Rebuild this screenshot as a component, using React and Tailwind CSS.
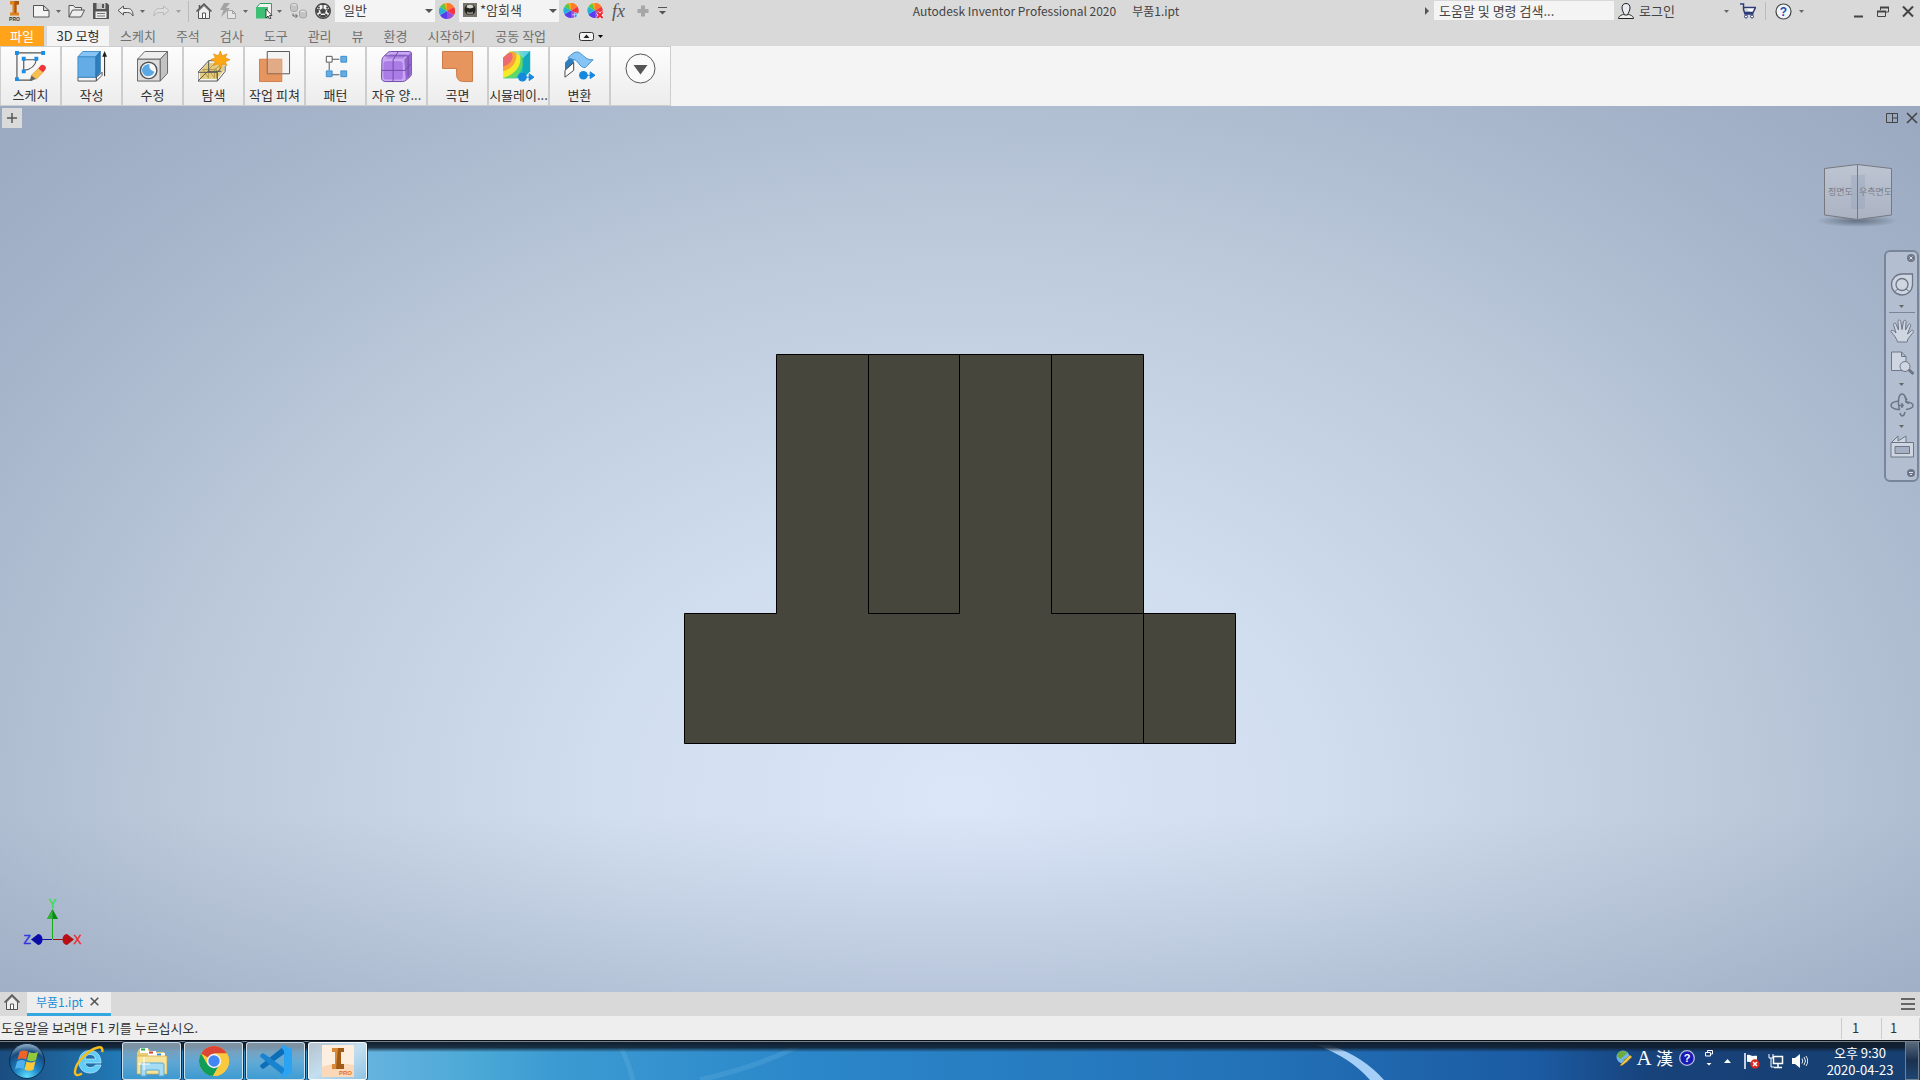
import React from "react";

const FONT = "font-['Noto_Sans_CJK_KR',sans-serif]";

function Caret({ className = "" }) {
  return (
    <svg className={`h-[3px] w-[5px] shrink-0 ${className}`} viewBox="0 0 5 3" aria-hidden="true">
      <path d="M0 0h5L2.5 3z" fill="#666" />
    </svg>
  );
}

function SelectArrow() {
  return (
    <svg className="pointer-events-none absolute right-0.5 top-[9px] h-1 w-2" viewBox="0 0 8 4" aria-hidden="true">
      <path d="M0 0h8L4 4z" fill="#555" />
    </svg>
  );
}

function Tool({ label, className = "", box = "0 0 16 16", children }) {
  return (
    <button type="button" aria-label={label} className={`h-4 shrink-0 ${className}`}>
      <svg className="block h-full w-full" viewBox={box} aria-hidden="true">
        {children}
      </svg>
    </button>
  );
}

function Wheel() {
  return (
    <g>
      <path d="M8 8L4 1A8 8 0 0 1 12 1z" fill="#ffa424" />
      <path d="M8 8L8 0A8 8 0 0 1 15 4z" fill="#ff7a2c" />
      <path d="M8 8L15 4A8 8 0 0 1 15 12z" fill="#f5353c" />
      <path d="M8 8L15 12A8 8 0 0 1 8 16z" fill="#9a4fd8" />
      <path d="M8 8L8 16A8 8 0 0 1 1 12z" fill="#5a3cf0" />
      <path d="M8 8L1 12A8 8 0 0 1 1 4z" fill="#28b0d8" />
      <path d="M8 8L1 4A8 8 0 0 1 5 .5z" fill="#5cc83c" />
    </g>
  );
}

function TitleBar() {
  return (
    <header className="flex h-[22px] items-center bg-[#d9d9d9] text-[#444]">
      <div className="flex shrink-0 items-center">
        <button type="button" aria-label="Inventor" className="ml-2 h-5 w-3">
          <svg className="block h-full w-full overflow-visible" viewBox="0 0 12 20">
            <path d="M2 0h9v3.500H8.500v8H11v3H2v-3h2.500v-8H2z" fill="#e0811e" />
            <path d="M6.500 0H11v3.500H8.500v8l-2 1z" fill="#a9560f" />
            <text x="6.500" y="20" textAnchor="middle" fontSize="5" fontWeight="700" fontFamily="Liberation Sans, sans-serif" fill="#333">PRO</text>
          </svg>
        </button>
        <Tool label="새로 만들기" className="ml-[13px] w-[17px]" box="0 0 17 16">
          <path d="M.500 2.500h10l5.500 5v6.500H.500zM10.500 2.500V7.500H16" fill="#f4f4f4" stroke="#555" />
        </Tool>
        <Caret className="ml-[6px]" />
        <Tool label="열기" className="ml-[7px] w-[17px]" box="0 0 17 16">
          <path d="M1 14V2.500h4.500l1.500 2h6.500V7M1 14L4.500 7h12L13 14z" fill="#eee" stroke="#555" />
        </Tool>
        <Tool label="저장" className="ml-2 w-4">
          <path d="M0 0h14l2 2v14H0z" fill="#555" />
          <path d="M3.500 0h9v6h-9z" fill="#c9c9c9" />
          <path d="M9 1h2v4H9z" fill="#555" />
          <path d="M2.500 8.500h11V15h-11z" fill="#eee" />
          <path d="M4 10.500h8M4 13h8" stroke="#777" />
        </Tool>
        <Tool label="명령 취소" className="ml-2 w-[17px]" box="0 0 17 16">
          <path d="M1 7.500L6.500 3v2.500h4c3.500 0 5.500 2 5.500 7.500-1.500-2.500-3-3.500-5.500-3.500h-4V12z" fill="#eee" stroke="#555" />
        </Tool>
        <Caret className="ml-[6px]" />
        <Tool label="명령 복구" className="ml-2 w-[17px]" box="0 0 17 16">
          <path d="M16 7.500L10.500 3v2.500h-4C3 5.500 1 7.500 1 13c1.500-2.500 3-3.500 5.500-3.500h4V12z" fill="#ddd" stroke="#b9b9b9" />
        </Tool>
        <Caret className="ml-[6px] opacity-50" />
        <span className="ml-[7px] h-[21px] w-px bg-[#bbb]" />
        <Tool label="홈" className="ml-[7px] w-4">
          <path d="M2.500 8v7.500h11V8L8 2.500z" fill="#eee" stroke="#555" />
          <path d="M.500 8.500L8 1l7.500 7.500M3.500 5V2" fill="none" stroke="#555" strokeWidth="1.500" />
          <path d="M6.500 15v-5h3v5" fill="#fff" stroke="#555" />
        </Tool>
        <Tool label="업데이트" className="ml-2 w-4">
          <path d="M4 0h6L6 5h4L1 14l2.500-7H0z" fill="#a3a3a3" />
          <path d="M7.500 7.500h5l3 3v5h-8zM12.500 7.500v3h3" fill="#e6e6e6" stroke="#a3a3a3" />
        </Tool>
        <Caret className="ml-[7px]" />
        <Tool label="선택" className="ml-2 w-[17px]" box="0 0 17 16">
          <path d="M.500 4.500L4 .500h11.500V11L12 15" fill="#f2f2f2" stroke="#2f9e5c" />
          <path d="M0 4h12v11.500H0z" fill="#3fbf74" />
          <path d="M10 6v9l2-2 1.500 3 1.500-.8-1.500-2.700H16z" fill="#fff" stroke="#222" strokeWidth=".8" />
        </Tool>
        <Caret className="ml-1" />
        <Tool label="재지정" className="ml-2 w-[17px]" box="0 0 17 16">
          <path d="M.500 2.500a3.500 2 0 0 1 7 0v4a3.500 2 0 0 1-7 0zM9.500 9a3.500 2 0 0 1 7 0v4a3.500 2 0 0 1-7 0z" fill="#c4c4c4" stroke="#a6a6a6" />
          <path d="M1.500 2.500a2.500 1.300 0 0 1 5 0zM10.500 9a2.500 1.300 0 0 1 5 0z" fill="#e8e8e8" />
          <path d="M3 10.500V13h4M5.500 11l2 2-2 2" fill="none" stroke="#666" />
        </Tool>
        <Tool label="재질" className="ml-2 w-4">
          <circle cx="8" cy="8" r="7.300" fill="#f2f2f2" stroke="#444" strokeWidth="1.400" />
          <path d="M8 5l3 2-1 3.500H6L5 7zM5 1l3 1.700L11 1zM1 6l2.500 0L4 9 1.500 11zM15 6h-2.500L12 9l2.500 2zM5 14.500l.5-2.500h5l.5 2.500zM2.500 3.500L5 3.800 4.500 5.500 2.500 5.500zM13.500 3.500L11 3.800l.5 1.700 2 0zM3 12l2-1.500 .5 1.500-1 1.500zM13 12l-2-1.500-.5 1.500 1 1.500z" fill="#444" />
          <path d="M8 2.500V5M5 7L3.500 6M11 7l1.500-1M6 10.500L5 12M10 10.500l1 1.500" stroke="#444" />
        </Tool>
        <div className="relative ml-1 h-[22px] w-[100px]">
          <select aria-label="재질" className="block h-full w-full appearance-none bg-[#f4f4f4] pb-0.5 pl-2 text-[13px] leading-5">
            <option>일반</option>
          </select>
          <SelectArrow />
        </div>
        <Tool label="모양" className="ml-1 w-4"><Wheel /></Tool>
        <div className="relative ml-1 h-[22px] w-[100px]">
          <select aria-label="모양" className="block h-full w-full appearance-none bg-[#f4f4f4] pb-0.5 pl-[21px] text-[13px] leading-5">
            <option>*암회색</option>
          </select>
          <svg className="pointer-events-none absolute left-1 top-[3px] h-[14px] w-[14px]" viewBox="0 0 14 14">
            <path d="M0 0h14v14H0z" fill="#77756c" />
            <circle cx="7" cy="6.500" r="5.500" fill="#22221f" />
            <path d="M3.500 4.500a3.500 3 0 0 1 7 0L7 5.500z" fill="#d7d6ce" />
            <path d="M4 8.500q3 2 6 0v2q-3 2-6 0z" fill="#8e8c82" />
          </svg>
          <SelectArrow />
        </div>
        <Tool label="조정" className="ml-1 w-[17px]" box="0 0 17 17">
          <Wheel />
          <path d="M9 12.500h7M11.500 10.500h3v3l-1.500 3-1.500-3z" fill="#1e8be6" stroke="#fff" strokeWidth=".6" />
        </Tool>
        <Tool label="지우기" className="ml-[7px] w-[17px]" box="0 0 17 17">
          <Wheel />
          <path d="M10.500 10l5.500 6M16 10l-5.500 6" stroke="#fff" strokeWidth="3.500" />
          <path d="M10.500 10l5.500 6M16 10l-5.500 6" stroke="#ee2530" strokeWidth="2.200" />
        </Tool>
        <button type="button" aria-label="매개변수" className="ml-2 h-5 w-4 text-left font-['Liberation_Serif',serif] text-[18px] italic leading-5 text-[#555]">
          <span>fx</span>
        </button>
        <Tool label="추가" className="ml-[9px] w-3" box="0 0 12 16">
          <path d="M4 2.500h4v3.500h3.500v4H8v3.500H4V10H.500V6H4z" fill="#a6a6a6" />
        </Tool>
        <Tool label="사용자화" className="ml-[9px] w-[9px]" box="0 0 9 16">
          <path d="M0 4.500h9" stroke="#555" />
          <path d="M1 8h7L4.500 11.500z" fill="#555" />
        </Tool>
      </div>

      <h1 className="flex min-w-0 flex-1 justify-center gap-4 whitespace-nowrap text-xs leading-5">
        <span>Autodesk Inventor Professional 2020</span>
        <span>부품1.ipt</span>
      </h1>

      <div className="flex shrink-0 items-center">
        <button type="button" aria-label="검색 접기" className="h-4 w-1">
          <svg className="block h-full w-full" viewBox="0 0 4 16"><path d="M0 4l4 4-4 4z" fill="#555" /></svg>
        </button>
        <input
          type="text"
          aria-label="검색"
          placeholder="도움말 및 명령 검색..."
          className="mb-0.5 ml-[5px] h-[19px] w-[180px] bg-[#f4f4f4] px-[5px] text-[13px] leading-[19px] placeholder:text-[#444]"
        />
        <button type="button" className="ml-1 flex w-[99px] items-center gap-[5px] text-[13px] leading-5">
          <svg className="h-4 w-4 shrink-0" viewBox="0 0 16 16">
            <path d="M.500 15.500c0-2.500 3-3.500 6-4.500h3c3 1 6 2 6 4.500z" fill="#eee" stroke="#222" />
            <path d="M8 .500c3 0 4 2 4 4.500S10 10.500 9.500 12h-3C6 10.500 4 7.500 4 5S5 .500 8 .500z" fill="#e8ecf2" stroke="#222" />
          </svg>
          <span>로그인</span>
        </button>
        <Caret className="ml-[7px]" />
        <Tool label="앱 스토어" className="ml-[11px] w-4">
          <path d="M0 1h3.500v5.500L5 11h8.500M3.500 4.500H15.500L13 9.500H4.500" fill="#fff" stroke="#2c3a75" strokeWidth="1.500" />
          <circle cx="6" cy="13.500" r="1.500" fill="#fff" stroke="#2c3a75" />
          <circle cx="12" cy="13.500" r="1.500" fill="#fff" stroke="#2c3a75" />
        </Tool>
        <span className="ml-[9px] h-[18px] w-px bg-[#bbb]" />
        <button type="button" aria-label="도움말" className="ml-[9px] h-[17px] w-[17px]">
          <svg className="block h-full w-full" viewBox="0 0 17 17">
            <circle cx="8.500" cy="8.500" r="7.500" fill="#f2f5fa" stroke="#444" strokeWidth="1.200" />
            <text x="8.500" y="13" textAnchor="middle" fontSize="12" fontWeight="700" fontFamily="Liberation Sans, sans-serif" fill="#1c4fb5">?</text>
          </svg>
        </button>
        <Caret className="ml-[7px]" />
        <Tool label="최소화" className="ml-[50px] w-[9px]" box="0 0 9 16">
          <path d="M0 13.500h9" stroke="#444" strokeWidth="2" />
        </Tool>
        <Tool label="이전 크기로" className="ml-[14px] w-3" box="0 0 12 16">
          <path d="M3.500 7V4.500h8V9H9" fill="none" stroke="#444" />
          <path d="M3 4.500h9" stroke="#444" strokeWidth="2" />
          <path d="M.500 8.500h8v5h-8z" fill="none" stroke="#444" />
          <path d="M0 8.500h9" stroke="#444" strokeWidth="2" />
        </Tool>
        <Tool label="닫기" className="ml-[13px] mr-1.5 w-3" box="0 0 12 16">
          <path d="M1 3.500l10 10M11 3.500l-10 10" stroke="#444" strokeWidth="2" />
        </Tool>
      </div>
    </header>
  );
}

const TABS = ["스케치", "주석", "검사", "도구", "관리", "뷰", "환경", "시작하기", "공동 작업"];

function RibbonTabs() {
  return (
    <nav className="flex h-6 items-stretch bg-[#d9d9d9] pt-1 text-[13px] leading-5 text-[#707070]">
      <button type="button" className="w-11 bg-[#ffa31a] pb-0.5 text-white">파일</button>
      <button type="button" className="ml-[3px] w-[62px] bg-[#f4f4f4] pb-0.5 text-[#333]">3D 모형</button>
      <div className="ml-px flex">
        {TABS.map((t) => (
          <button key={t} type="button" className="px-[10px] pb-0.5">{t}</button>
        ))}
      </div>
      <button type="button" aria-label="리본 표시" className="ml-[23px] flex items-center gap-1">
        <svg className="h-[9px] w-[15px]" viewBox="0 0 15 9">
          <rect x=".5" y=".5" width="14" height="8" rx="2" fill="#f4f4f4" stroke="#333" />
          <path d="M4.500 6h6l-3-3.500z" fill="#222" />
        </svg>
        <svg className="h-[3px] w-[5px]" viewBox="0 0 5 3"><path d="M0 0h5L2.500 3z" fill="#000" /></svg>
      </button>
    </nav>
  );
}

const PANELS = [
  {
    label: "스케치",
    icon: (
      <g>
        <path d="M3 2h26M2 4v26h16" fill="none" stroke="#555" strokeWidth="1.200" />
        <path d="M9 9v11c8-1 12-5 13-11z" fill="none" stroke="#555" strokeWidth="1.200" />
        <path d="M0 0h4v4H0zM27 0h4v4h-4zM0 27h4v4H0zM7 6h4v4H7zM20 6h4v4h-4zM7 19h4v4H7z" fill="#1a8fe8" />
        <path d="M15 31l2-6 5 4z" fill="#666" />
        <path d="M17 25l7-7 5 4-7 7z" fill="#f8bf50" stroke="#d8952a" strokeWidth=".6" />
        <path d="M24 18l2-2.500a3 3 0 0 1 5 4L29 22z" fill="#f0343c" />
      </g>
    ),
  },
  {
    label: "작성",
    icon: (
      <g>
        <path d="M2 27h19v4H2zM21 31l6-6v-3l-6 5z" fill="#f4f4f4" stroke="#555" />
        <path d="M2 6L7 .500h18L20.500 6z" fill="#86c4f5" stroke="#3f8ecb" />
        <path d="M2 6h18.500v21H2z" fill="#63ace6" stroke="#3f8ecb" />
        <path d="M20.500 6L25 .500V22l-4.500 5z" fill="#2f7fbe" stroke="#2b74b0" />
        <path d="M29.500 26V3" stroke="#222" />
        <path d="M27 6l2.500-6L32 6z" fill="#222" />
      </g>
    ),
  },
  {
    label: "수정",
    icon: (
      <g>
        <path d="M.500 8.500L8 .500h23.500L24 8.500z" fill="#eee" stroke="#666" />
        <path d="M.500 8.500H24v22.500H.500z" fill="#dcdcdc" stroke="#666" />
        <path d="M24 8.500L31.500 .500V23L24 31z" fill="#c2c2c2" stroke="#666" />
        <circle cx="12" cy="20" r="8.500" fill="#fafafa" stroke="#555" strokeWidth="1.500" />
        <path d="M7 15.500c3-2 5-2 6-1.500-1 4 1 6 5 7.500-1 3-4 5-7 4.500-4-.5-6-4-6-7z" fill="#5ba9e4" />
      </g>
    ),
  },
  {
    label: "탐색",
    icon: (
      <g>
        <path d="M2 21l8-9h17v8l-8 9H2z" fill="#e3cd82" />
        <path d="M5 19l6 9 0-9 6 9 0-9 9-6M11 19l7-7M5 19h14v9" fill="none" stroke="#b79b48" />
        <path d="M0 22L11 10h6M0 22v9h20l8-10v-6M0 22h20v9M20 22l4-5M0 31l10-10h14M11 10v11" fill="none" stroke="#555" />
        <path d="M23 0l2 5 5-2-2 4 5 2-5 2 2 4-5-2-2 5-2-5-5 2 2-4-5-2 5-2-2-4 5 2z" fill="#ffa816" stroke="#e58a06" strokeWidth=".7" />
      </g>
    ),
  },
  {
    label: "작업 피쳐",
    icon: (
      <g>
        <path d="M8.500 .500h23v23h-23z" fill="#f4f4f4" stroke="#555" />
        <path d="M.500 8.500h23v23H.500z" fill="#e6955f" stroke="#d27f48" />
        <path d="M8.500 8.500h15v15h-15z" fill="#e2ab88" />
        <path d="M8.500 8.500v15h15" fill="none" stroke="#8a6550" />
      </g>
    ),
  },
  {
    label: "패턴",
    icon: (
      <g>
        <path d="M12 8.500h8M12 24.500h8M9.500 12v8" stroke="#555" />
        <path d="M6.500 5.500h6v6h-6z" fill="#fff" stroke="#555" />
        <path d="M21.500 5.500h6v6h-6zM6.500 20.500h6v6h-6zM21.500 20.500h6v6h-6z" fill="#63ace6" stroke="#3f8ecb" />
      </g>
    ),
  },
  {
    label: "자유 양...",
    icon: (
      <g>
        <path d="M1 9Q1 7 3 5.500L7 1.500Q8 .500 10 .500h19Q31.500 .500 31.500 3v20Q31.500 25 30 26.500L26 30Q24.500 31.500 22 31.500H5Q.500 31.500 .500 27z" fill="#c9a9f2" stroke="#6f4aa8" />
        <path d="M24 9l6-7q1.500 1 1.500 3v18q0 2-2 4l-4 3z" fill="#9468ce" />
        <rect x="2.500" y="10.500" width="20" height="19" rx="3" fill="#ab7be6" />
        <path d="M5 8L9 3h18l-4 5z" fill="#b38ae8" />
        <path d="M1 20h24l6-7M12.500 31V9l5-8M4 5h24v21" fill="none" stroke="#6f4aa8" />
      </g>
    ),
  },
  {
    label: "곡면",
    icon: <path d="M.500 .500h31v31H22c-5 0-7-3-7-8V18H.500z" fill="#e6955f" stroke="#cc7a45" />,
  },
  {
    label: "시뮬레이...",
    icon: (
      <g>
        <path d="M0 7L8 0h20v21l-7 7H0z" fill="#18bccb" />
        <path d="M0 7L8 0h12c4 10 0 20-7 28H0z" fill="#5fd86a" />
        <path d="M0 7L8 0h8c5 10 0 20-9 25L0 28z" fill="#f5e929" />
        <path d="M0 7L7 1h6c3 9-3 17-13 20z" fill="#f9a33a" />
        <path d="M0 7L6 2h3c3 7-2 12-9 14z" fill="#ee6a72" />
        <path d="M20 8l8-8v21l-7 7z" fill="#0f9fb4" opacity=".7" />
        <path d="M9 0h19l-7 7z" fill="#7fd8f0" opacity=".7" />
        <circle cx="20" cy="27" r="4.500" fill="#1787de" />
        <path d="M23 27h5M27 23.500l5 3.500-5 3.500z" fill="#1787de" stroke="#1787de" />
      </g>
    ),
  },
  {
    label: "변환",
    icon: (
      <g>
        <path d="M1 12L10 2v10L1 20z" fill="#2f7fbe" />
        <path d="M1 20l9-8v8l-9 7z" fill="#fff" stroke="#444" />
        <path d="M4 7Q10 1 13 1c6 0 8 9 17 8l-8 8c-6 1-8-9-12-8z" fill="#86c4f5" stroke="#3f8ecb" />
        <circle cx="20" cy="25" r="4.500" fill="#1787de" />
        <path d="M23 25h5M27 21.500l5 3.500-5 3.500z" fill="#1787de" stroke="#1787de" />
      </g>
    ),
  },
];

function Ribbon() {
  return (
    <div className="flex h-[60px] gap-0.5 bg-[#f4f4f4] py-px pl-px">
      {PANELS.map((p) => (
        <button
          key={p.label}
          type="button"
          className="flex w-[59px] shrink-0 flex-col items-center justify-between whitespace-nowrap bg-linear-to-b from-[#fdfdfd] to-[#ececec] pt-1 text-[13px] leading-5 text-[#333] outline outline-1 outline-[#cdcdcd]"
        >
          <svg className="h-8 w-8" viewBox="0 0 33 33" aria-hidden="true">{p.icon}</svg>
          <span>{p.label}</span>
        </button>
      ))}
      <button
        type="button"
        aria-label="추가 패널"
        className="flex w-[59px] shrink-0 justify-center bg-linear-to-b from-[#fdfdfd] to-[#ececec] pt-[6px] outline outline-1 outline-[#cdcdcd]"
      >
        <svg className="h-[31px] w-[31px]" viewBox="0 0 31 31" aria-hidden="true">
          <circle cx="15.500" cy="15.500" r="14.500" fill="#fafafa" stroke="#555" />
          <path d="M8.500 12h14l-7 9.500z" fill="#555" />
        </svg>
      </button>
    </div>
  );
}

function Model() {
  return (
    <svg className="h-[390px] w-[552px]" viewBox="0 0 552 390" aria-label="부품1">
      <path d="M92.500 .500H459.500V259.500H551.500V389.500H.500V259.500H92.500z" fill="#47463c" stroke="#000" />
      <path d="M184.500 .500V259.500H275.500V.500M367.500 .500V259.500H459.500V389.500" fill="none" stroke="#000" />
    </svg>
  );
}

function ViewCube() {
  return (
    <svg className="absolute right-5 top-[57px] h-16 w-[84px]" viewBox="0 0 84 64" aria-label="ViewCube">
      <defs>
        <radialGradient id="cubeShadow">
          <stop offset="0" stopColor="#5f6b7d" stopOpacity=".9" />
          <stop offset="1" stopColor="#5f6b7d" stopOpacity="0" />
        </radialGradient>
        <linearGradient id="cubeFace" x1="0" y1="0" x2="0" y2="1">
          <stop offset="0" stopColor="#bdc4d2" />
          <stop offset="1" stopColor="#abb3c3" />
        </linearGradient>
      </defs>
      <ellipse cx="41" cy="58" rx="41" ry="6" fill="url(#cubeShadow)" />
      <path d="M8.500 5.500L41.500 1.500v55L8.500 52z" fill="url(#cubeFace)" stroke="#77797f" />
      <path d="M41.500 1.500l34 4V52l-34 4.500z" fill="url(#cubeFace)" stroke="#77797f" />
      <path d="M35 12h14v34H35z" fill="#8fa0ba" opacity=".35" />
      <path d="M41.500 2v55" stroke="#77797f" />
      <text x="12" y="32" fontSize="9" fill="#787d88">정면도</text>
      <text x="43" y="32" fontSize="9" fill="#787d88">우측면도</text>
    </svg>
  );
}

function NavButton({ label, className = "", children }) {
  return (
    <button type="button" aria-label={label} className={`h-6 w-6 ${className}`}>
      <svg className="block h-full w-full" viewBox="0 0 24 24" fill="#d0d6e1" stroke="#6c7686">
        {children}
      </svg>
    </button>
  );
}

function NavBar() {
  return (
    <div className="absolute right-px top-36 flex w-[35px] flex-col items-center rounded-md border-2 border-[#78859a] bg-[#b3bfd0] pb-[3px]">
      <button type="button" aria-label="닫기" className="mr-0.5 mt-0.5 h-2 w-2 self-end">
        <svg className="block h-full w-full" viewBox="0 0 8 8"><circle cx="4" cy="4" r="4" fill="#6c7686" /><path d="M2.500 2.500l3 3M5.500 2.500l-3 3" stroke="#dde" /></svg>
      </button>
      <NavButton label="전체 탐색 휠" className="mt-[11px]">
        <path d="M12 1h10.500v11A10.500 10.500 0 1 1 12 1z" strokeWidth="1.300" />
        <path d="M4 19l4-3M20 19l-4-3" />
        <circle cx="12" cy="11.500" r="6" strokeWidth="1.300" />
      </NavButton>
      <Caret className="mt-2" />
      <span className="mt-1 h-px w-[26px] shrink-0 bg-[#78859a]" />
      <NavButton label="초점이동" className="mt-[6px]">
        <path d="M7.500 23c-1-4-3-6-6.500-10.500 0-2 2.500-1.500 5 1.500L3.500 5.500c0-2 2-2 2.500-.5L8.500 11 8 2.500c0-2 2.500-2 2.800 0L12 10.500l1.500-8c.5-2 2.700-1.500 2.500.5L15.500 11l3-5.500c1-1.500 2.700-.5 2 1.500L17.500 15l4-3.500c1.500-1 2.500.5 1.500 2L18 20l-1 3z" />
      </NavButton>
      <NavButton label="줌" className="mt-2">
        <path d="M1.500 1h10l4.500 4.500V19.500h-14.500zM11.500 1v4.500H16" />
        <path d="M18 18l5.500 5" strokeWidth="3" />
        <circle cx="15" cy="15.500" r="5" />
      </NavButton>
      <Caret className="mt-2" />
      <NavButton label="궤도" className="mt-[7px]">
        <path d="M9 8C4 8.500 1 10.500 1 12.500S5 17 10 16.500M15 8.500c4 .5 8 2 8 4s-3 3.500-7 4" fill="none" strokeWidth="1.500" />
        <path d="M9.500 17C7 8 9 1 12 1s4 5 4 7M10 20c1 4 4 4 5-1" fill="none" strokeWidth="1.500" />
        <path d="M9 12.500h5M12 10v5M16 9l3 1.500M15 4l2 3" strokeWidth="1.500" />
      </NavButton>
      <Caret className="mt-2" />
      <NavButton label="면 보기" className="mt-[6px]">
        <path d="M2 8L8 2v5l8-5v6" />
        <path d="M1 8.500h22.500V23H1z" />
        <path d="M5 12.500h14.500v7H5z" fill="#a5b0c2" />
      </NavButton>
      <button type="button" aria-label="옵션" className="mr-0.5 mt-[11px] h-2 w-2 self-end">
        <svg className="block h-full w-full" viewBox="0 0 8 8"><circle cx="4" cy="4" r="4" fill="#6c7686" /><path d="M2 3.500h4M3 5.500h2" stroke="#dde" /></svg>
      </button>
    </div>
  );
}

function Axes() {
  return (
    <svg className="absolute bottom-11 left-[22px] h-[50px] w-[62px]" viewBox="0 0 62 50" aria-label="좌표축">
      <g fontSize="12" fontFamily="Liberation Sans, sans-serif">
        <text x="26.500" y="10" fill="#2fe24a" stroke="#2fe24a" strokeWidth=".4">Y</text>
        <text x="1.500" y="46" fill="#3434e0" stroke="#3434e0" strokeWidth=".4">Z</text>
        <text x="51.500" y="46" fill="#f02828" stroke="#f02828" strokeWidth=".4">X</text>
      </g>
      <path d="M30.500 20v21" stroke="#12b012" />
      <path d="M25 21l5.500-10 5.500 10z" fill="#0c8a16" />
      <path d="M25 21l5.500-10v10z" fill="#36b03a" />
      <path d="M31 41.500h10" stroke="#a01010" />
      <path d="M30 41.500H20" stroke="#1414a0" />
      <path d="M52 41.500l-7 5.500c-6 0-6-11 0-11z" fill="#b80f14" />
      <path d="M9 41.500l7 5.500c6 0 6-11 0-11z" fill="#0a0aa8" />
    </svg>
  );
}

function Viewport() {
  return (
    <main className="relative flex flex-1 items-center justify-center overflow-hidden bg-[linear-gradient(to_top,rgba(140,156,182,0.38),rgba(140,156,182,0)_20%),radial-gradient(ellipse_68%_108%_at_50%_78%,#dbe6f9_0%,#d1deef_27%,#bdcadc_58%,#a6b5ca_84%,#94a3ba_112%)]">
      <button type="button" aria-label="새 탭" className="absolute left-0.5 top-0.5 h-5 w-5 bg-[#dadada]">
        <svg className="block h-full w-full" viewBox="0 0 20 20"><path d="M10 5v10M5 10h10" stroke="#555" strokeWidth="1.500" /></svg>
      </button>
      <div className="absolute right-0.5 top-1.5 flex gap-2">
        <button type="button" aria-label="배열" className="h-3 w-3">
          <svg className="block h-full w-full" viewBox="0 0 12 12"><path d="M.500 1.500h11v9H.500zM6.500 1v10M6.500 6h5" fill="none" stroke="#444" /></svg>
        </button>
        <button type="button" aria-label="문서 닫기" className="h-3 w-3">
          <svg className="block h-full w-full" viewBox="0 0 12 12"><path d="M1 1l10 10M11 1L1 11" stroke="#444" strokeWidth="1.600" /></svg>
        </button>
      </div>
      <Model />
      <ViewCube />
      <NavBar />
      <Axes />
    </main>
  );
}

function DocTabs() {
  return (
    <div className="flex h-6 items-stretch bg-[#d9d9d9] text-xs">
      <button type="button" aria-label="홈" className="ml-1 w-4 pb-1">
        <svg className="h-4 w-4" viewBox="0 0 16 16">
          <path d="M2.500 8v7.500h11V8L8 2.500z" fill="#eee" stroke="#555" />
          <path d="M.500 8.500L8 1l7.500 7.500" fill="none" stroke="#555" strokeWidth="1.500" />
          <path d="M6.500 15v-5h3v5" fill="#fff" stroke="#555" />
        </svg>
      </button>
      <div className="ml-[7px] flex w-[84px] items-center border-b-[3px] border-[#35a7e0] bg-[#eee] pb-0.5 pl-[9px]">
        <button type="button" className="leading-[19px] text-[#1b8fd6]">부품1.ipt</button>
        <button type="button" aria-label="탭 닫기" className="ml-[7px] h-[9px] w-[9px]">
          <svg className="block h-full w-full" viewBox="0 0 9 9"><path d="M.7 .7l7.600 7.600M8.300 .7L.7 8.300" stroke="#555" strokeWidth="1.600" /></svg>
        </button>
      </div>
      <button type="button" aria-label="메뉴" className="ml-auto mr-[5px] w-[14px]">
        <svg className="h-[14px] w-[14px]" viewBox="0 0 14 14"><path d="M0 2h14M0 7h14M0 12h14" stroke="#666" strokeWidth="2" /></svg>
      </button>
    </div>
  );
}

function StatusBar() {
  return (
    <div className="flex h-6 items-center bg-[#eee] pl-px text-[13px] leading-5 text-[#333]">
      <p className="flex-1">도움말을 보려면 F1 키를 누르십시오.</p>
      <span className="h-[21px] w-10 border-l border-[#ccc] pl-[10px]">1</span>
      <span className="h-[21px] w-[39px] border-x border-[#ccc] pl-2">1</span>
    </div>
  );
}

function TaskButton({ label, active = false, children }) {
  return (
    <button
      type="button"
      aria-label={label}
      className={`flex h-[38px] w-[59px] items-center justify-center rounded-[3px] border ${
        active
          ? "border-white/90 bg-linear-to-br from-[#b6c3cf] via-[#c3dff0] to-[#8fc3e4]"
          : "border-white/70 bg-linear-to-b from-[#8e9dab]/90 via-[#6fb0d8]/80 to-[#3f9fd6]/80"
      } shadow-[0_0_0_1px_rgba(10,25,45,0.8)]`}
    >
      <svg className="h-8 w-8" viewBox="0 0 32 32" aria-hidden="true">{children}</svg>
    </button>
  );
}

function Taskbar() {
  return (
    <footer className="relative flex h-10 items-center overflow-hidden border-t border-[#0c1118] bg-[linear-gradient(to_right,#1b4d80_0%,#2178b4_6%,#3c9fd6_18%,#66b3df_19%,#4aa8d6_25%,#3c9ad2_29%,#2b87c9_42%,#2372b8_65%,#1b5ba3_80%,#17427a_86%,#173f70_100%)] text-white">
      <svg className="absolute inset-0 h-full w-full" viewBox="0 0 1920 39" preserveAspectRatio="none" aria-hidden="true">
        <defs>
          <linearGradient id="barTop" x1="0" y1="0" x2="0" y2="1">
            <stop offset="0" stopColor="#101c2a" />
            <stop offset=".6" stopColor="#101c2a" stopOpacity=".85" />
            <stop offset="1" stopColor="#101c2a" stopOpacity="0" />
          </linearGradient>
        </defs>
        <path d="M618 0q10 20 15 39M700 39q60-14 100-35" fill="none" stroke="#7fc4ec" strokeWidth="5" opacity=".2" />
        <path d="M1316 4q34 12 54 35h14q-20-23-54-35z" fill="#a6cff8" />
        <path d="M0 0h1920v11H0z" fill="url(#barTop)" />
        <path d="M0 .500h1920" stroke="#76838f" />
      </svg>
      <div className="relative flex items-center">
        <button type="button" aria-label="시작" className="ml-[9px] h-9 w-9">
          <svg className="block h-full w-full" viewBox="0 0 36 36">
            <defs>
              <radialGradient id="orb" cx=".5" cy=".95" r=".95">
                <stop offset="0" stopColor="#5ee0ff" />
                <stop offset=".4" stopColor="#1c7fc0" />
                <stop offset=".75" stopColor="#174c80" />
                <stop offset="1" stopColor="#9fb8cc" />
              </radialGradient>
            </defs>
            <circle cx="18" cy="18" r="17.500" fill="url(#orb)" stroke="#0d2b48" />
            <path d="M10.500 9c3-2 6-2 8.500-.5l-2 8c-3-1.500-6-1.500-8.500 .5z" fill="#f0642a" />
            <path d="M20 9c3 1.500 6 1.500 9-.5l-2 8.500c-3 2-6 1.500-9 0z" fill="#93c83a" />
            <path d="M8 18.500c3-2 6-2 8.500-.5l-2 8c-3-1.500-6-1-8.500 .5z" fill="#4fb2ee" />
            <path d="M17.500 18.500c3 1.500 6 1.500 9-.5l-2 8.500c-3 2-6 1.500-9 0z" fill="#fcc93a" />
          </svg>
        </button>
        <button type="button" aria-label="Internet Explorer" className="ml-7 h-8 w-8">
          <svg className="block h-full w-full" viewBox="0 0 32 32">
            <path d="M17 5.500c7 0 11 5 11 12.500H12c.5 3 2.500 4.500 5.500 4.500 2.500 0 4-1 5-2.500h5.500c-1.500 5-5.500 8-11 8C10 28 6 23.500 6 17S10 5.500 17 5.500zM12 14h10.500c-.5-3-2.500-4.500-5.500-4.500s-4.500 1.500-5 4.500z" fill="#62cdf6" stroke="#c6effd" strokeWidth=".7" />
            <path d="M29 7c1-3 0-5.500-4-4.500C15 5 3 17 2 26c-.5 5 3 5 7 2.500" fill="none" stroke="#f6bd1e" strokeWidth="2.400" />
          </svg>
        </button>
      </div>
      <div className="relative ml-[17px] flex gap-[3px]">
        <TaskButton label="탐색기">
          <path d="M3 4h10l1 3h14v22H1V8z" fill="#e9cd73" />
          <path d="M4 3h8v5H4z" fill="#fff" /><path d="M5 3.500h4v2H5z" fill="#1fae3c" />
          <path d="M12 6h8v5h-8z" fill="#fff" /><path d="M13 6.500h4v2h-4z" fill="#d8402c" />
          <path d="M20 8h9v5h-9z" fill="#fff" /><path d="M21 8.500h4v2h-4z" fill="#2a94e0" />
          <path d="M1 11h30v18H1z" fill="#f7e49c" stroke="#d0a844" strokeWidth=".7" />
          <path d="M5 20q0-2 2-2h19q2 0 2 2v11h-5v-6H10v6H5z" fill="#a5dcf5" stroke="#5aa9d4" />
          <path d="M8 12v13M2 19h12" stroke="#fff" />
        </TaskButton>
        <TaskButton label="Chrome">
          <circle cx="16" cy="16" r="15" fill="#fbc93e" />
          <path d="M16 16L3 8.500A15 15 0 0 1 29 8.500H16z" fill="#db4437" />
          <path d="M3 8.500A15 15 0 0 0 15 31l6.500-11.500L9.500 19.500z" fill="#109d58" />
          <path d="M16 8.500h13A15 15 0 0 1 15 31l6.500-11.500z" fill="#fbc93e" />
          <circle cx="16" cy="16" r="7.200" fill="#f4f4f4" />
          <circle cx="16" cy="16" r="5.700" fill="#4285f4" />
        </TaskButton>
        <TaskButton label="Visual Studio Code">
          <path d="M24 1v8L4 23.500q-1 .5-2 0L.5 22q-1-1 0-2z" fill="#0d6eb8" />
          <path d="M24 31v-8L4 8.500q-1-.5-2 0L.5 10q-1 1 0 2z" fill="#1a83d0" />
          <path d="M23 0l9 4v24l-9 4c-1 0-2-1-2-2l3-4V6l-3-4q1-2 2-2z" fill="#2aa4f2" />
        </TaskButton>
        <TaskButton label="Inventor" active>
          <path d="M0 0h32v32H0z" fill="#fdeee0" />
          <path d="M0 22q14-6 32-2v12H0z" fill="#fbd9b8" />
          <path d="M10 3h12v4h-3v12h3v5H10v-5h3V7h-3z" fill="#d98938" />
          <path d="M16 3h6v4h-3v12h3v5h-8z" fill="#a25a14" />
          <text x="17" y="30" fontSize="6" fontWeight="700" fontFamily="Liberation Sans, sans-serif" fill="#e0741a">PRO</text>
        </TaskButton>
      </div>

      <div className="relative ml-auto flex h-full items-center">
        <div className="mb-1.5 flex items-center gap-1">
          <button type="button" aria-label="언어" className="h-4 w-4">
            <svg className="block h-full w-full" viewBox="0 0 16 16">
              <circle cx="7" cy="7" r="6.500" fill="#6fb6e8" />
              <path d="M3 2c3-2 7-1 8 1L8 6 4 9 1 6zM8 9l4-1-2 5-3-1z" fill="#6cab3a" />
              <path d="M5 14L14 5l2 2-9 8-3 1z" fill="#f6c44a" stroke="#9a6a1c" strokeWidth=".5" />
            </svg>
          </button>
          <button type="button" className="h-5 w-4 font-['Liberation_Serif',serif] text-[21px] leading-5">A</button>
          <button type="button" className="h-5 w-4 text-[17px] leading-5">漢</button>
          <button type="button" aria-label="도움말" className="ml-[3px] h-4 w-4">
            <svg className="block h-full w-full" viewBox="0 0 16 16">
              <circle cx="8" cy="8" r="7.300" fill="#1919b4" stroke="#b8c0dc" strokeWidth="1.300" />
              <text x="8" y="12" textAnchor="middle" fontSize="11" fontWeight="700" fontFamily="Liberation Sans, sans-serif" fill="#fff">?</text>
            </svg>
          </button>
        </div>
        <button type="button" aria-label="입력 도구 모음" className="mb-1.5 ml-[10px] h-4 w-2">
          <svg className="block h-full w-full" viewBox="0 0 8 16">
            <path d="M2.500 3V.500h5v3.500H6M.500 2.500h5v3.500h-5z" fill="none" stroke="#fff" />
            <path d="M1.500 13h5L4 15.500z" fill="#fff" />
          </svg>
        </button>
        <button type="button" aria-label="숨겨진 아이콘" className="ml-[11px] h-4 w-[7px]">
          <svg className="block h-full w-full" viewBox="0 0 7 16"><path d="M0 10h7L3.500 6z" fill="#fff" /></svg>
        </button>
        <button type="button" aria-label="관리 센터" className="ml-[13px] h-4 w-4">
          <svg className="block h-full w-full" viewBox="0 0 16 16">
            <path d="M1 0v16" stroke="#fff" strokeWidth="1.500" />
            <path d="M3 2c3-1 4 1 6 1 2 0 3-.5 4 0v7H9c-2 0-3-2-6-1z" fill="#fff" />
            <circle cx="11" cy="11" r="4.700" fill="#d8281e" />
            <path d="M9 9l4 4M13 9l-4 4" stroke="#fff" strokeWidth="1.500" />
          </svg>
        </button>
        <button type="button" aria-label="네트워크" className="ml-2 h-4 w-4">
          <svg className="block h-full w-full" viewBox="0 0 16 16">
            <path d="M5.500 3.500h9v7h-9z" fill="#24466f" stroke="#fff" strokeWidth="1.500" />
            <path d="M10 11v3M6 14.500h8" stroke="#fff" strokeWidth="1.500" />
            <path d="M1 1v4h4V1M3 5v9h3" fill="none" stroke="#fff" />
          </svg>
        </button>
        <button type="button" aria-label="볼륨" className="ml-2 h-4 w-4">
          <svg className="block h-full w-full" viewBox="0 0 16 16">
            <path d="M0 5h3l5-4v14l-5-4H0z" fill="#fff" />
            <path d="M10 5.500q1.500 2.500 0 5M12 4q3 4 0 8M14 3q3.500 5 0 10" fill="none" stroke="#fff" strokeWidth=".9" />
          </svg>
        </button>
        <button type="button" className="ml-[18px] w-[68px] whitespace-nowrap text-center text-[13px] leading-[17px]">
          <span className="block">오후 9:30</span>
          <span className="block">2020-04-23</span>
        </button>
        <button
          type="button"
          aria-label="바탕 화면 보기"
          className="ml-[11px] mr-px h-full w-[14px] border border-[#6f8092] bg-linear-to-b from-[#5c6b7d] via-[#1c3150] to-[#1d4673]"
        />
      </div>
    </footer>
  );
}

export default function App() {
  return (
    <div className={`flex min-h-screen flex-col overflow-hidden bg-[#d9d9d9] ${FONT}`}>
      <TitleBar />
      <RibbonTabs />
      <Ribbon />
      <Viewport />
      <DocTabs />
      <StatusBar />
      <Taskbar />
    </div>
  );
}
